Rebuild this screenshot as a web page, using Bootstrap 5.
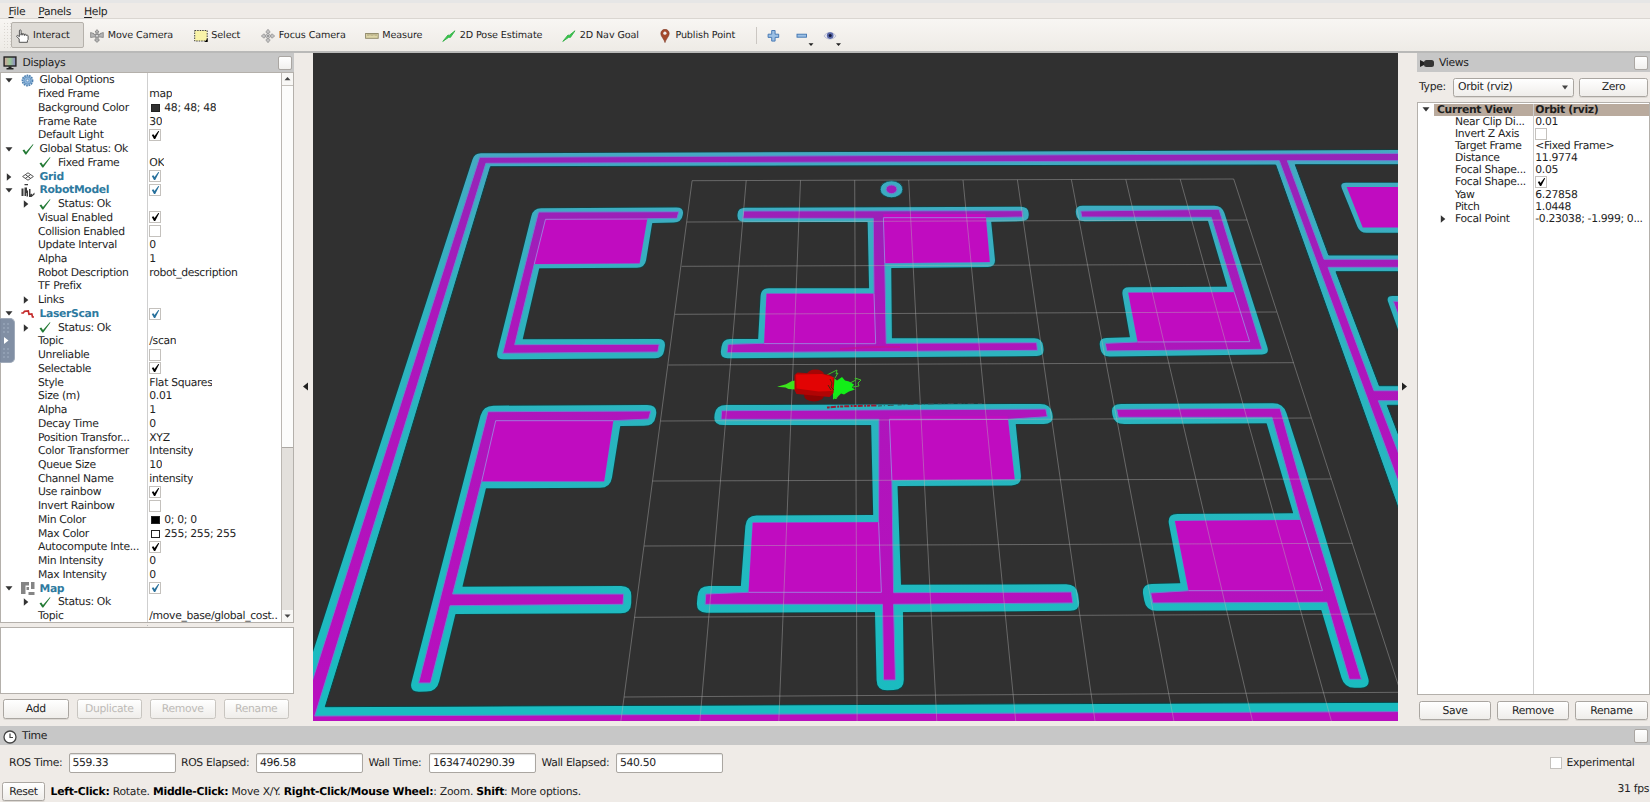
<!DOCTYPE html>
<html lang="en">
<head>
<meta charset="utf-8">
<title>RViz</title>
<link href="https://cdn.jsdelivr.net/npm/bootstrap@5.3.0/dist/css/bootstrap.min.css" rel="stylesheet">
<style>
:root{--win:#efebe7;--head:#c7c7c7;--line:#b4b0ab}
body{width:1650px;height:802px;overflow:hidden;background:var(--win);color:#1e1e1e;font-family:"DejaVu Sans",sans-serif;font-size:10.8px;letter-spacing:-.33px;line-height:12px;text-rendering:geometricPrecision}
svg{display:block;flex:none}
.menubar{height:19px;border-top:3px solid #e6e6e6;border-bottom:1px solid #dad6d1;padding:2px 0 0 8.5px;gap:13px}
.menubar u{text-underline-offset:2px}
.toolbar{height:34px;background:linear-gradient(#f8f6f3,#eeebe6);border-bottom:2px solid #b9b9b8;font-size:9.6px;letter-spacing:-.1px;padding-left:3px}
.grip{width:8px;height:26px;background:radial-gradient(circle,#d0ccc6 .6px,transparent 1px) 0 0/3px 3px;opacity:.7}
.tool{height:26px;padding:2px 0 0 3.5px;gap:3.6px;white-space:nowrap;border:1px solid transparent}
.tool.active{background:#dedbd6;border-color:#b5b1ab;border-radius:2px}
.tool:nth-child(2){width:73px}.tool:nth-child(3){width:103.5px;margin-left:1.7px}.tool:nth-child(4){width:67.5px}.tool:nth-child(5){width:103.5px}
.tool:nth-child(6){width:77.5px}.tool:nth-child(7){width:120px}.tool:nth-child(8){width:96.6px}.tool:nth-child(9){width:101.6px}
.tsep{width:1px;height:17px;background:#cbc7c2}
.tool + .tsep + svg{margin-top:2px}
.mid{height:668px}
.left-dock{width:294px}
.right-dock{width:233px}
.gutter{position:relative}
.g1{width:19px}.g2{width:19px}
.gutter svg{position:absolute;top:329px}
.dockhead{height:19px;background:var(--head);padding-right:2px;color:#222}
.dockhead .ttl{margin-left:6px;margin-right:auto}
.floatbtn{width:14px;height:14px;border:1px solid #aaa6a2;border-radius:2px;background:linear-gradient(#fff,#f1f0ee)}
.treebox{border:1px solid var(--line);background:#fff;position:relative}
.left-dock .treebox{height:551px}
.trow{height:13.74px;white-space:nowrap}
.tname{width:147px;border-right:1px solid #cfcfcf;flex:none;position:relative;overflow:hidden;padding-top:1.2px}
.tval{padding:1.2px 0 0 1.3px;overflow:hidden}
.ar0{width:16px;display:flex;justify-content:center;flex:none}
.ico{width:14px;display:flex;justify-content:center;flex:none;margin-left:3.5px;margin-right:5px}
.plain{padding-left:37px}
.ar1{margin-left:22px;margin-right:9px;flex:none}
.tree-b{font-weight:700;color:#2e7a9f}
.cbx{width:12px;height:12px;border:1px solid #c4c1bd;background:#fff;flex:none}
.tval .cbx{margin-top:-.8px}
.cbx svg{margin:0 0 0 1px}
.swatch{width:9px;height:8px;border:1px solid #222;margin:0 4px 0 2px}
.sb{width:12px;border-left:1px solid #bbb7b2;background:#e3e0dc}
.sb .bt{height:12px;background:#f8f7f5}
.sb .thumb{height:363px;background:#fcfcfb;border-top:1px solid #c5c1bc;border-bottom:1px solid #aca8a3}
.split{height:4px;background:radial-gradient(circle,#bbb 0.7px,transparent 1px) center/3px 3px no-repeat}
.desc{height:67px;border:1px solid var(--line);background:#fff}
.qbtn{height:19px;border:1px solid #aaa6a1;border-radius:2.5px;background:linear-gradient(#fff,#efedea);display:flex;align-items:center;justify-content:center;color:#1e1e1e;box-shadow:0 1px 0 #dcd8d3}
.qbtn.off{color:#bdbab6;border-color:#c8c5c0;box-shadow:none}
.left-btns{padding:5px 0 0 0}
.left-btns .qbtn{margin:0 5px 0 3px;height:20px}
.handle{position:absolute;left:0;top:318px;width:15px;height:45px;background:#78879e;border:1px solid #9aa5b5;border-left:0;border-radius:0 5px 5px 0;opacity:.93}
.right-dock .trow{height:12.1px}
.right-dock .tname{width:116px}
.right-dock .tname,.right-dock .tval{padding-top:0}
.right-dock .cbx{margin-top:-.5px}
.right-dock .selrow{font-weight:700}
.right-dock .selrow .lab,.right-dock .selrow .tval{background:#b9aa9d}
.timehead{height:19px}
.fld{height:20px;border:1px solid #aaa6a1;border-radius:2px;background:#fff;padding-left:3px;display:flex;align-items:center;box-shadow:inset 0 1px 1px #ddd}
.b{font-weight:700;color:#000}
#hint{letter-spacing:-.25px}
</style>
</head>
<body class="d-flex flex-column m-0">
<nav class="menubar d-flex align-items-center flex-shrink-0"><span><u>F</u>ile</span><span><u>P</u>anels</span><span><u>H</u>elp</span></nav>

<div class="toolbar d-flex align-items-center flex-shrink-0">
  <div class="grip"></div>
  <div class="tool active d-flex align-items-center"><svg width="14" height="14" viewBox="0 0 14 14"><path d="M3.2 13.3V10L.8 7.6c-.5-.7.5-1.6 1.3-.9l1.3 1V1.8c0-1.3 1.7-1.3 1.7 0v4.4-1c0-1 1.7-1 1.7 0v1-.7c0-1 1.7-1 1.7 0v1-.6c0-.9 1.7-.9 1.7 0v.8c0-.8 1.900-.8 1.900.2v3.600l-.7 1.200v1.600z" fill="#fff" stroke="#444" stroke-width=".9"/></svg>Interact</div>
  <div class="tool d-flex align-items-center"><svg width="14" height="14" viewBox="0 0 14 14"><g fill="#b5b5b5" stroke="#777" stroke-width=".7"><path d="M7 .6l2 2.4H8v2.6h2V4.6L13.300 3.500v5L10 8v0H8.200v3H9.500L7 13.400 4.500 11H5.800V8H4v0L.6 8.500v-5L4 4.600v1h2V3H5z"/><circle cx="7" cy="6.800" r="1.500" fill="#ddd"/></g></svg>Move Camera</div>
  <div class="tool d-flex align-items-center"><svg width="14" height="14" viewBox="0 0 14 14"><rect x=".7" y="1.500" width="12.500" height="10.500" fill="#f9f3a8" stroke="#444" stroke-dasharray="1.500 1"/><path d="M13.700 9.300v3.700H10.500z" fill="#000"/></svg>Select</div>
  <div class="tool d-flex align-items-center"><svg width="14" height="14" viewBox="0 0 14 14"><g fill="#c4c4c4" stroke="#888" stroke-width=".7"><path d="M7 .3L9.200 3 8 4.300H6L4.800 3zM7 13.700L4.800 11 6 9.700h2L9.200 11zM.3 7L3 4.800 4.300 6v2L3 9.200zM13.700 7L11 9.200 9.700 8V6L11 4.800z"/><circle cx="7" cy="7" r="2.300" fill="#ddd"/><circle cx="7" cy="7" r=".7" fill="#666"/></g></svg>Focus Camera</div>
  <div class="tool d-flex align-items-center"><svg width="14" height="14" viewBox="0 0 14 14"><rect x=".6" y="4.500" width="12.600" height="4.800" fill="#ddd6a8" stroke="#8c8565" stroke-width=".9"/><path d="M3 5v2M5 5v1.500M7 5v2M9 5v1.500M11 5v2" stroke="#8c8565" stroke-width=".7"/></svg>Measure</div>
  <div class="tool d-flex align-items-center"><svg width="14" height="14" viewBox="0 0 14 14"><path d="M.8 12.400L6 6l1.200.4L13 1.800 8.400 8.400 6.800 8.200z" fill="#35c94a" stroke="#35b048" stroke-width=".9"/></svg>2D Pose Estimate</div>
  <div class="tool d-flex align-items-center"><svg width="14" height="14" viewBox="0 0 14 14"><path d="M.8 12.400L6 6l1.200.4L13 1.800 8.400 8.400 6.800 8.200z" fill="#35c94a" stroke="#35b048" stroke-width=".9"/></svg>2D Nav Goal</div>
  <div class="tool d-flex align-items-center"><svg width="13" height="14" viewBox="0 0 13 14"><path d="M6 13.600C5.200 10 1.800 7.600 1.800 4.500a4.200 4.200 0 0 1 8.400 0C10.200 7.600 6.800 10 6 13.600z" fill="#a5492b" stroke="#7e3a26" stroke-width=".6"/><circle cx="5.900" cy="4.200" r="1.600" fill="#eee"/></svg>Publish Point</div>
  <div class="tsep"></div>
  <svg width="84" height="24" viewBox="757 24 84 24"><path d="M771.700 30.500h3.400v3.700h3.600v3.200h-3.600v3.700h-3.400v-3.700h-3.600v-3.200h3.600z" fill="#9cc0e4" stroke="#3e73b0" stroke-width=".9"/><rect x="797" y="34.200" width="9.500" height="3" fill="#9cc0e4" stroke="#3e73b0" stroke-width=".9"/><path d="M808.500 43.200h5l-2.500 2.700zM836 43.200h5l-2.500 2.700z" fill="#222"/><path d="M824 36c2.500-4.600 9.500-4.600 12 0-2.500 4-9.500 4-12 0z" fill="#e3e4ef" stroke="#b4b7cc" stroke-width=".8"/><circle cx="830.200" cy="35.600" r="3.300" fill="#5968a8"/><circle cx="830.200" cy="35.600" r="1.500" fill="#101638"/></svg>
</div>

<main class="mid d-flex flex-shrink-0">
  <aside class="left-dock d-flex flex-column">
    <div class="dockhead d-flex align-items-center flex-shrink-0"><svg style="margin-left:3px" width="14" height="14" viewBox="0 0 13 14"><defs><linearGradient id="scr"><stop offset="0" stop-color="#d2a39d"/><stop offset=".5" stop-color="#98c795"/><stop offset="1" stop-color="#8f86c6"/></linearGradient></defs><rect x=".6" y="1" width="11.800" height="9" fill="url(#scr)" stroke="#222" stroke-width="1.400"/><path d="M5 10.500h3V12h2v1.500H3V12h2z" fill="#222"/></svg><span class="ttl" style="margin-left:5.500px">Displays</span><span class="floatbtn"></span></div>
    <div class="treebox d-flex flex-shrink-0">
      <div id="displays" class="flex-grow-1 overflow-hidden"></div>
      <div class="sb d-flex flex-column"><div class="bt"><svg width="11" height="11" viewBox="0 0 11 11"><path d="M2.500 7.200h6L5.500 4z" fill="#444"/></svg></div><div class="thumb"></div><div class="flex-grow-1"></div><div class="bt"><svg width="11" height="11" viewBox="0 0 11 11"><path d="M2.500 4.500h6l-3 3.200z" fill="#444"/></svg></div></div>
    </div>
    <div class="split flex-shrink-0"></div>
    <div class="desc flex-shrink-0"></div>
    <div class="row g-0 flex-nowrap left-btns">
      <div class="col"><div class="qbtn">Add</div></div>
      <div class="col"><div class="qbtn off">Duplicate</div></div>
      <div class="col"><div class="qbtn off">Remove</div></div>
      <div class="col"><div class="qbtn off">Rename</div></div>
    </div>
  </aside>
  <div class="gutter g1"><svg style="left:9px" width="6" height="9"><path d="M5 .5v8L0 4.500z" fill="#222"/></svg></div>
  <svg id="scene" width="1085" height="668" viewBox="313 53 1085 668"></svg>
  <div class="gutter g2"><svg style="left:4px" width="6" height="9"><path d="M0 .5v8L5 4.500z" fill="#222"/></svg></div>
  <aside class="right-dock d-flex flex-column">
    <div class="dockhead d-flex align-items-center flex-shrink-0"><svg style="margin-left:3px" width="14" height="12" viewBox="0 0 14 12"><path d="M0 3l4 2V8L0 10z" fill="#222"/><rect x="4" y="3" width="10" height="7" rx="2.500" fill="#333"/></svg><span class="ttl" style="margin-left:5px">Views</span><span class="floatbtn"></span></div>
    <div class="d-flex align-items-center flex-shrink-0" style="height:30px;padding-left:2px"><span style="width:34px">Type:</span><div class="qbtn justify-content-between" style="width:121px;padding:0 4px">Orbit (rviz)<svg width="8" height="5"><path d="M1 .5h6L4 4.500z" fill="#444"/></svg></div><div class="qbtn ms-auto" style="width:69px;margin-right:2px">Zero</div></div>
    <div class="treebox flex-shrink-0" style="height:593px"><div id="views" class="h-100 d-flex flex-column" style="padding-top:.8px"></div></div>
    <div class="row g-0 flex-nowrap" style="padding:6px 0 0 2px">
      <div class="col"><div class="qbtn" style="margin-right:5px">Save</div></div>
      <div class="col"><div class="qbtn" style="margin-right:4px;margin-left:1px">Remove</div></div>
      <div class="col"><div class="qbtn" style="margin-right:2px;margin-left:2px">Rename</div></div>
    </div>
  </aside>
</main>

<footer class="d-flex flex-column flex-grow-1" style="padding-top:5px">
  <div class="dockhead timehead d-flex align-items-center flex-shrink-0"><svg style="margin-left:3px;margin-top:3px" width="14" height="14" viewBox="0 0 14 14"><circle cx="7" cy="7" r="6" fill="#fff" stroke="#444" stroke-width="1.300"/><path d="M7 3.500V7.500h3" fill="none" stroke="#444" stroke-width="1.200"/></svg><span class="ttl" style="margin-left:5px">Time</span><span class="floatbtn"></span></div>
  <div class="d-flex align-items-center flex-shrink-0" style="height:34px;padding:1px 0 0 9px">
    <span style="width:59.500px">ROS Time:</span><div class="fld" style="width:107px">559.33</div>
    <span style="width:80.500px;padding-left:5.500px">ROS Elapsed:</span><div class="fld" style="width:107px">496.58</div>
    <span style="width:66px;padding-left:5.500px">Wall Time:</span><div class="fld" style="width:107px">1634740290.39</div>
    <span style="width:80px;padding-left:5.500px">Wall Elapsed:</span><div class="fld" style="width:107px">540.50</div>
    <div class="ms-auto d-flex align-items-center" style="width:100px"><span class="cbx" style="margin-right:4.500px"></span>Experimental</div>
  </div>
  <div class="d-flex align-items-center" style="height:24px;padding:1px 0 0 2px">
    <div class="qbtn" style="width:43px;margin-right:5.500px">Reset</div>
    <div class="text-nowrap" id="hint"><span class="b">Left-Click:</span> Rotate. <span class="b">Middle-Click:</span> Move X/Y. <span class="b">Right-Click/Mouse Wheel:</span>: Zoom. <span class="b">Shift</span>: More options.</div>
    <div class="ms-auto" style="padding:0 1px 6px 0">31 fps</div>
  </div>
</footer>

<div class="handle"><svg width="14" height="43" viewBox="0 0 14 43"><g fill="#aab6ca"><circle cx="4" cy="5" r=".7"/><circle cx="8" cy="5" r=".7"/><circle cx="4" cy="9" r=".7"/><circle cx="8" cy="9" r=".7"/><circle cx="4" cy="13" r=".7"/><circle cx="8" cy="13" r=".7"/><circle cx="4" cy="30" r=".7"/><circle cx="8" cy="30" r=".7"/><circle cx="4" cy="34" r=".7"/><circle cx="8" cy="34" r=".7"/><circle cx="4" cy="38" r=".7"/><circle cx="8" cy="38" r=".7"/></g><path d="M4 18v7l4.500-3.500z" fill="#fff"/></svg></div>

<script src="https://cdn.jsdelivr.net/npm/bootstrap@5.3.0/dist/js/bootstrap.bundle.min.js"></script>
<script>
const down='<svg width="8" height="5"><path d="M.5 .3h7L4 4.500z" fill="#333"/></svg>';
const right='<svg width="6" height="8"><path d="M.8 .3v7.400L5.300 4z" fill="#333"/></svg>';
const ok='<svg width="12" height="11" viewBox="0 0 12 11"><path d="M.5 6.300l1.800-.8L4 8 10.800.3l.7.300L4.300 10.600H3.300z" fill="#237a35"/></svg>';
const box=(c,col)=>`<span class="cbx">${c?`<svg width="9" height="10" viewBox="0 0 9 10"><path d="M.8 5l1.700-.7 1 1.700L7.300 1l.9.300L4.200 9H3z" fill="${col||'#000'}"/></svg>`:''}</span>`;
const T=box(1),F=box(0),B=box(1,'#27709c');
const sw=(c,t)=>`<span class="swatch" style="background:${c}"></span>${t}`;
const icons={
 gear:'<svg width="13" height="13" viewBox="0 0 13 13"><circle cx="6.500" cy="6.500" r="5.100" fill="#9fc3e3" stroke="#4f80b0" stroke-width="1.600" stroke-dasharray="1.700 .8"/><circle cx="6.500" cy="6.500" r="3.600" fill="#8cb6de" stroke="#4f80b0" stroke-width=".6"/><circle cx="6.500" cy="6.500" r="1.300" fill="#dbe9f5" stroke="#4f80b0" stroke-width=".6"/></svg>',
 ok:ok,
 grid:'<svg width="12" height="9" viewBox="0 0 12 9"><path d="M6 .8L11.400 4.500 6 8.200.6 4.500zM3.300 2.600l5.400 3.800M8.700 2.600l-5.400 3.800" fill="none" stroke="#555" stroke-width="1"/></svg>',
 robot:'<svg width="14" height="13" viewBox="0 0 14 13"><path d="M3.500 0H7v1.200H3.500zM.5 4.500h2V12h-2zM3.500 3.500H6V6l1 1v5.500H5.500V9H5v3H3.500zM8 5h1.500v5.500L11 9.500V11l2.500-2.500v2L10.500 13H8z" fill="#3a3a3a"/></svg>',
 laser:'<svg width="13" height="11" viewBox="0 0 13 11"><path d="M.3 5h2L3.500 3.300 7.300 3 8 6.300 10.800 6 11.500 9H13" fill="none" stroke="#c42a2a" stroke-width="1.700"/></svg>',
 map:'<svg width="14" height="13" viewBox="0 0 14 13"><path d="M0 0h8v3.500H4.500V12H0zM10 0h3.500v7H10zM5.500 5H8v3H5.500zM7.500 10H13.500v3h-6z" fill="#858585"/></svg>'};
/* kind: 0 root with icon, 1 property, 2 child with status icon, 3 expandable property, 4 status without arrow */
const rows=[[0,'gear','Global Options','',down],[1,'','Fixed Frame','map'],[1,'','Background Color',sw('#303030','48; 48; 48')],[1,'','Frame Rate','30'],[1,'','Default Light',T],
[0,'ok','Global Status: Ok','',down],[4,'','Fixed Frame','OK'],[0,'grid','<span class="tree-b">Grid</span>',B,right],[0,'robot','<span class="tree-b">RobotModel</span>',B,down],[2,'','Status: Ok',''],
[1,'','Visual Enabled',T],[1,'','Collision Enabled',F],[1,'','Update Interval','0'],[1,'','Alpha','1'],[1,'','Robot Description','robot_description'],[1,'','TF Prefix',''],[3,'','Links',''],
[0,'laser','<span class="tree-b">LaserScan</span>',B,down],[2,'','Status: Ok',''],[1,'','Topic','/scan'],[1,'','Unreliable',F],[1,'','Selectable',T],[1,'','Style','Flat Squares'],[1,'','Size (m)','0.01'],[1,'','Alpha','1'],[1,'','Decay Time','0'],
[1,'','Position Transfor...','XYZ'],[1,'','Color Transformer','Intensity'],[1,'','Queue Size','10'],[1,'','Channel Name','intensity'],[1,'','Use rainbow',T],[1,'','Invert Rainbow',F],[1,'','Min Color',sw('#000','0; 0; 0')],[1,'','Max Color',sw('#fff','255; 255; 255')],
[1,'','Autocompute Inte...',T],[1,'','Min Intensity','0'],[1,'','Max Intensity','0'],[0,'map','<span class="tree-b">Map</span>',B,down],[2,'','Status: Ok',''],[1,'','Topic','/move_base/global_cost..']];
document.getElementById('displays').innerHTML=rows.map(([k,i,n,v,a])=>{
 let h;
 if(k==0)h=`<span class="ar0">${a}</span><span class="ico">${icons[i]}</span>${n}`;
 else if(k==1)h=`<span class="plain">${n}</span>`;
 else if(k==3)h=`<span class="ar1">${right}</span>${n}`;
 else h=`<span class="ar1${k==4?' invisible':''}">${right}</span><span style="margin:0 7px 0 1px">${ok}</span>${n}`;
 return `<div class="trow d-flex"><div class="tname d-flex align-items-center">${h}</div><div class="tval d-flex align-items-center">${v}</div></div>`}).join('');
const vr=[['Near Clip Di...','0.01'],['Invert Z Axis',F],['Target Frame','&lt;Fixed Frame&gt;'],['Distance','11.9774'],['Focal Shape...','0.05'],['Focal Shape...',T],['Yaw','6.27858'],['Pitch','1.0448'],['Focal Point','-0.23038; -1.999; 0...',1]];
document.getElementById('views').innerHTML=
 `<div class="trow selrow d-flex flex-shrink-0"><div class="tname d-flex align-items-stretch"><span class="ar0 align-items-center">${down}</span><span class="lab flex-grow-1" style="padding-left:3px">Current View</span></div><div class="tval flex-grow-1">Orbit (rviz)</div></div>`+
 vr.map(([n,v,a])=>`<div class="trow d-flex flex-shrink-0"><div class="tname d-flex align-items-center"><span style="width:37px;padding-left:22px">${a?right:''}</span>${n}</div><div class="tval d-flex align-items-center">${v}</div></div>`).join('')+
 '<div class="d-flex flex-grow-1"><div class="tname"></div></div>';

/* 3D view: cost map, drawn as flat polygons */
const pts=s=>s.trim().split(/\s+/).map(p=>p.split(',').map(Number));
function rounded(s,r){const P=pts(s),n=P.length;let area=0;
 for(let i=0;i<n;i++){const a=P[i],b=P[(i+1)%n];area+=a[0]*b[1]-b[0]*a[1]}
 let d='';
 for(let i=0;i<n;i++){const a=P[(i+n-1)%n],b=P[i],c=P[(i+1)%n];
  const cr=(b[0]-a[0])*(c[1]-b[1])-(b[1]-a[1])*(c[0]-b[0]);
  const k=cr*area>0?r:.5,l1=Math.hypot(a[0]-b[0],a[1]-b[1]),l2=Math.hypot(c[0]-b[0],c[1]-b[1]);
  const t1=Math.min(k/l1,.45),t2=Math.min(k/l2,.45);
  const p=[b[0]+(a[0]-b[0])*t1,b[1]+(a[1]-b[1])*t1],q=[b[0]+(c[0]-b[0])*t2,b[1]+(c[1]-b[1])*t2];
  d+=(i?'L':'M')+p.map(v=>v.toFixed(1))+'Q'+b+' '+q.map(v=>v.toFixed(1))}
 return d+'Z'}
const cy=(s,r)=>`<path d="${rounded(s,r*1.3)}" fill="url(#cg)" stroke="#06484a" stroke-opacity=".8" stroke-width="1.600" paint-order="stroke"/>`;
const mg=s=>`<polygon points="${s}" fill="url(#mgr)" stroke="#6c7fd0" stroke-width="1"/>`;
const bx=s=>`<polygon points="${s}" fill="#c00cc0"/>`;
const ln=s=>`<polyline points="${s}" fill="none" stroke="#a078dc" stroke-width="1"/>`;
const room=(c,d)=>`<polygon points="${c}" fill="url(#cg)" stroke="#6c7fd0" stroke-width="1"/><polygon points="${d}" fill="#303030" stroke="#084244" stroke-width="1"/>`;
let g=`<defs><linearGradient id="cg" gradientUnits="userSpaceOnUse" x1="0" y1="150" x2="0" y2="700"><stop offset="0" stop-color="#45a9c2"/><stop offset=".3" stop-color="#30b2bf"/><stop offset="1" stop-color="#1abcc0"/></linearGradient><linearGradient id="mgr" gradientUnits="userSpaceOnUse" x1="0" y1="150" x2="0" y2="700"><stop offset="0" stop-color="#9524b8"/><stop offset=".12" stop-color="#9c20b8"/><stop offset=".3" stop-color="#ac17bb"/><stop offset="1" stop-color="#b80fbe"/></linearGradient></defs><rect x="313" y="53" width="1085" height="668" fill="#303030"/>`;
g+=cy('474.5,153.300 1420,150 1420,760 278,760',5);
g+=mg('479.600,157.300 1420,153.300 1420,760 287,760');
/* rooms cut into the outer wall */
g+=room('485.900,163.300 1279.300,160.700 1420,540 1420,711.500 314.700,716','490.500,166.700 1275.700,165 1420,569 1420,702.200 325.300,706.700 398.900,470');
g+=room('1287.300,160.700 1420,160.700 1420,259.300 1324,259.300','1295.300,164.700 1420,164.700 1420,255 1328.700,255');
g+=room('1328,267.300 1420,267.300 1420,390.700 1374,390.700','1336,271.700 1420,271.700 1420,385.700 1379.300,385.700');
g+=room('1378.300,400.700 1420,400.700 1420,509','1387.300,405.300 1420,405.300 1420,491');
g+=cy('1339.500,182.700 1420,182.700 1420,232.700 1360,232.700',5)+bx('1346.700,187 1420,187 1420,227.500 1362.700,227.500');
g+=cy('1386,296 1420,296 1420,390',5)+mg('1393.300,301.300 1420,301.300 1420,375');
g+=cy('533.300,208.300 684,207.300 681.500,222.300 652.200,223 644.800,267.700 539.200,268.300 522.700,339.300 666,339 663,358.300 495.600,359.300',6);
g+=mg('538.500,212 678.800,211.700 677,218.300 647.200,218.700 639.500,263.300 534.300,264 514.700,344.700 659.200,344.300 657.800,352 502.700,353.300');
g+=bx('545.500,219 647.200,218.700 639.500,263.300 534.300,264')+ln('647.200,219 545.500,219.300 534.300,264');
g+=cy('737.900,207.700 1028.300,206.700 1029,221 991.100,221.700 995.700,267 891.200,268 891.900,338.300 1042,338.300 1044.500,356 720,358.300 722.500,339 758.200,339 761,288.300 869.100,288.300 867.700,222 737.200,222',6);
g+=mg('743.800,211 1022.700,210.700 1022.900,217 985.900,217.700 989.700,262 884.800,263.300 886.200,343.300 1036.700,342.700 1037.400,350.300 727,352.700 728,344.300 764.200,343.300 766.600,293.700 874,293.700 873.300,218.300 742.800,218.300');
g+=bx('883.400,214 985.500,214 989.700,262 884.800,263')+ln('985.900,217.700 883.400,217.700 884.800,263.300')+bx('766.600,293.700 874,293.700 875.700,343.700 764.200,343.300')+ln('874,293.700 875.700,343.700 764.200,343.600');
g+='<ellipse cx="891.500" cy="189.300" rx="11.300" ry="8.500" fill="#3cabc1" stroke="#06484a" stroke-width=".8"/><ellipse cx="891.500" cy="189.300" rx="5.400" ry="4.300" fill="#a01db8" stroke="#6c7fd0"/>';
g+=cy('1075,205.700 1222,205.700 1269.700,354.300 1102,356.700 1098.500,338.300 1130,337.300 1121.200,287.300 1227.300,286.700 1208,220.700 1077,221.300',6);
g+=mg('1080.700,211 1219,209.300 1262,349.300 1106.700,351 1105.300,343.300 1137.700,342 1128.300,292.700 1234.300,292.300 1211.300,217.300 1081.700,217');
g+=bx('1128.300,292.700 1234.300,292.300 1249.700,341.700 1137.700,342')+ln('1234.300,292.300 1249.700,341.700 1137.700,342');
g+=cy('483.100,405.700 657.500,405 654.300,425.700 620.200,426 610.400,487.700 485.900,488.300 462.400,586.700 631.500,586 631,613.300 455.400,614 436.800,691.300 409,692',8);
g+=mg('488,411.700 650.800,411 648.600,419 613.200,420.700 604.100,481.300 481.700,481.300 452.600,594 623.700,594 623,604.300 450.100,605.700 430.500,683 418.600,683');
g+=bx('495.700,420.700 613.200,420.700 604.100,481.300 481.700,481.300')+ln('613.200,420.700 495.700,420.700 481.700,481.300');
g+=cy('716,405 1050.500,404 1054.200,424 1015.700,424 1021.800,485.300 897.500,486 901,584.700 1076.500,584.300 1080.500,610.700 902.900,612 903.900,690 876.800,690.300 875,612 696,612.700 698.500,586 740.900,586 746.200,515.700 873.200,515 871.200,425 713.200,425',8);
g+=mg('721.700,410.700 1045.800,409 1047.300,416.700 1008,419.300 1014.600,479.300 891.900,480 893.600,592.700 1071.400,592 1072.900,603 893.600,604.300 895.400,680 883.600,680 882.500,604.300 705.100,604.300 705.800,594 748.600,592.300 752.800,522.700 878.600,522.300 878.900,419.300 721,419.300');
g+=bx('889.400,416 1007.500,416 1014.600,479.300 891.900,480')+ln('1008,419.300 889.400,419.300 891.900,480')+bx('752.800,522.700 878.600,522.300 881.400,592.300 748.600,592.300')+ln('878.600,522.300 881.400,592.300 748.600,592.300');
g+=cy('1110.700,404 1283.300,403.300 1304.700,470 1371,687.500 1344.600,688 1321.400,610 1146,610.700 1141.500,584.300 1180.400,583.300 1167,514 1293.200,513.300 1266.700,423.300 1114,424',8);
g+=mg('1116.700,409.300 1280,408.300 1297.300,470 1361.400,679.300 1349.300,679.300 1326.800,602.300 1152.900,603 1150.700,593 1188.600,590.700 1175,521 1300.700,520 1272,417.300 1118.300,417.300');
g+=bx('1175,521 1300.700,520 1322.500,590.700 1188.600,590.700')+ln('1300.700,520 1322.500,590.700 1188.600,590.700');
/* ground grid */
const hz=[[692.1,180.7,1233.7,179],[686.9,222,1247.3,220],[681.6,266.3,1261.3,264.3],[675,314.3,1276.7,312],[668.3,365,1293.7,362.7],[660.6,421,1311,418],[652.5,481,1331.4,479],[644.1,546,1352.5,543.3],[634.3,617.3,1375.4,614],[624.1,697,1400,692.3]];
const vt=[[692.1,180.7,620.9,721],[746.2,180.5,699.9,721],[800.5,180.4,778.8,721],[854.7,180.2,857.1,721],[908.7,180,936.8,721],[963,180,1015.7,721],[1017.4,179.8,1095,721],[1071.4,179.6,1173.9,721],[1125.8,179.4,1252.5,721],[1180.2,179.2,1331.4,721],[1233.7,179,1410,721]];
g+='<g stroke="#b4b4b4" stroke-opacity=".42" stroke-width="1">'+[...hz,...vt].map(l=>`<line x1="${l[0]}" y1="${l[1]}" x2="${l[2]}" y2="${l[3]}"/>`).join('')+'</g>';
/* robot, particles and laser hits */
g+=`<path d="M777 386.800l9-2.500 6-3.300 3.500-.5v9l-7-.5-3-1.500z" fill="#3ce41c"/>
<path d="M833 377l4 3.500 5-3.500 3 3.500 4 1 5 3-2 3 3 2-6 2-5 3-3-1-4 4-4 2v-5l-2-10z" fill="#12ee18"/>
<path d="M827 375l6-3 4-2-1 4 2-1-3 5M850 383l6-3-1-2 6 2-3 3 1 3-6 1M833 396l3 3 2-4" fill="none" stroke="#3fbf2a" stroke-width="1"/>
<ellipse cx="815.500" cy="374.500" rx="8.500" ry="5" fill="#a40606"/><ellipse cx="814" cy="395.500" rx="10" ry="6" fill="#8e0303"/>
<path d="M794.500 375l3-2.500 31 2 6 3.500-1 15-4 4-33-3-2-4z" fill="#b00404"/><path d="M796 374.500l26-.5 11 3-.5 14-14 .5-22-3z" fill="#e20404"/>
<path d="M830 379l2 4-1 4 3 3M828 385l3 5" stroke="#4d2a08" fill="none"/>
<path d="M827 407.500q14-1.500 50-2" fill="none" stroke="#9b1a34" stroke-width="2" stroke-dasharray="3 1 5 1.500 2 1"/><path d="M878 406q50-3 105-2.500" fill="none" stroke="#3b4a50" stroke-width="1" stroke-dasharray="4 2 1 3 6 4"/>
<path d="M840 349q40-3 60-2" stroke="#c8108c" stroke-width="2" fill="none" opacity=".6"/>`;
document.getElementById('scene').innerHTML=g;
</script>
</body>
</html>
